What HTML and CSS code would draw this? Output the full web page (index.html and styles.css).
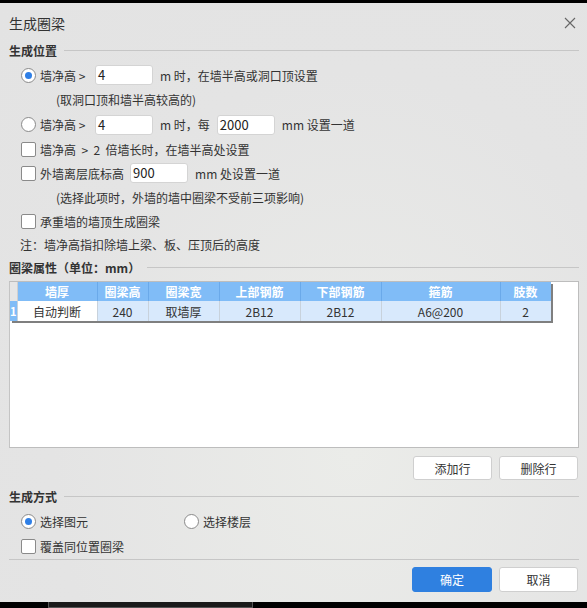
FILE: index.html
```html
<!DOCTYPE html>
<html lang="zh-CN">
<head>
    <meta charset="UTF-8" />
    <title>生成圈梁</title>
    <link rel="stylesheet" href="styles.css">
</head>
<body>
    <div class="topbar"></div>
    <div class="dialog">
        <div class="title-row">
            <span class="title">生成圈梁</span>
            <svg class="close" width="12" height="12" viewBox="0 0 12 12">
                <path d="M1 1 L11 11 M11 1 L1 11" stroke="#666" stroke-width="1.1" fill="none"/>
            </svg>
        </div>

        <div class="section"><span>生成位置</span><div class="rule"></div></div>

        <div class="row r1">
            <span class="radio checked"></span>
            <span class="lead">墙净高&nbsp;&gt;</span>
            <span class="input">4</span>
            <span>m 时，在墙半高或洞口顶设置</span>
        </div>
        <div class="row r2 hint">(取洞口顶和墙半高较高的)</div>
        <div class="row r3">
            <span class="radio"></span>
            <span class="lead">墙净高&nbsp;&gt;</span>
            <span class="input">4</span>
            <span>m 时，每</span>
            <span class="input">2000</span>
            <span>mm 设置一道</span>
        </div>
        <div class="row r4">
            <span class="check"></span>
            <span>墙净高&nbsp; &gt;&nbsp; 2&nbsp; 倍墙长时，在墙半高处设置</span>
        </div>
        <div class="row r5">
            <span class="check"></span>
            <span>外墙离层底标高</span>
            <span class="input">900</span>
            <span>mm 处设置一道</span>
        </div>
        <div class="row r6 hint">(选择此项时，外墙的墙中圈梁不受前三项影响)</div>
        <div class="row r7">
            <span class="check"></span>
            <span>承重墙的墙顶生成圈梁</span>
        </div>
        <div class="row note">注：墙净高指扣除墙上梁、板、压顶后的高度</div>

        <div class="section sec2"><span>圈梁属性（单位：mm）</span><div class="rule"></div></div>

        <div class="grid-box">
            <table class="grid">
                <tr class="head">
                    <th class="corner"></th>
                    <th class="c1">墙厚</th>
                    <th class="c2">圈梁高</th>
                    <th class="c3">圈梁宽</th>
                    <th class="c4">上部钢筋</th>
                    <th class="c5">下部钢筋</th>
                    <th class="c6">箍筋</th>
                    <th class="c7">肢数</th>
                </tr>
                <tr class="data">
                    <td class="rownum">1</td>
                    <td class="current">自动判断</td>
                    <td>240</td>
                    <td>取墙厚</td>
                    <td>2B12</td>
                    <td>2B12</td>
                    <td>A6@200</td>
                    <td>2</td>
                </tr>
            </table>
        </div>

        <div class="buttons grid-buttons">
            <button class="btn">添加行</button>
            <button class="btn">删除行</button>
        </div>

        <div class="section sec3"><span>生成方式</span><div class="rule"></div></div>

        <div class="row mode">
            <div class="mode-item">
                <span class="radio checked"></span>
                <span>选择图元</span>
            </div>
            <div class="mode-item">
                <span class="radio"></span>
                <span>选择楼层</span>
            </div>
        </div>
        <div class="row cover">
            <span class="check"></span>
            <span>覆盖同位置圈梁</span>
        </div>

        <div class="footer-rule"></div>
        <div class="buttons footer">
            <button class="btn primary">确定</button>
            <button class="btn">取消</button>
        </div>
    </div>
    <div class="taskbar">
        <div class="task"></div>
    </div>
</body>
</html>
```

FILE: styles.css
```css
html, body {
    margin: 0;
    padding: 0;
    width: 587px;
    height: 608px;
    overflow: hidden;
    font-family: "Noto Sans CJK SC", "Noto Sans", sans-serif;
    font-size: 12px;
    color: #333;
}

.topbar {
    height: 3px;
    background: #000;
}

.dialog {
    height: 599px;
    box-sizing: border-box;
    padding: 0 8px 0 9px;
    background: radial-gradient(ellipse at 60% 75%, #ebece9 0%, #e4e4e4 60%, #e3e3e3 100%);
    display: flex;
    flex-direction: column;
}

.title-row {
    height: 38px;
    display: flex;
    align-items: center;
    justify-content: space-between;
    padding-top: 1px;
    box-sizing: border-box;
}

.title {
    font-size: 14px;
    color: #333;
}

.close {
    margin-right: 3px;
}

.section {
    height: 18px;
    display: flex;
    align-items: center;
    font-weight: bold;
    color: #333;
}

.section .rule {
    flex: 1;
    margin-left: 7px;
    border-top: 1px solid #c6c6c6;
}

.sec2 {
    height: 24px;
}

.sec3 {
    height: 28px;
    padding-top: 2px;
}

.row {
    display: flex;
    align-items: center;
    gap: 7px;
    padding-left: 12px;
    height: 24px;
    white-space: nowrap;
}

.r1 { margin-top: 4px; }
.r2, .r3 { height: 25px; }
.note { height: 22px; padding-left: 11px; }

.hint {
    padding-left: 47px;
}

.lead {
    margin-left: -3px;
    width: 48px;
    flex: none;
}

.radio {
    width: 13px;
    height: 13px;
    border: 1px solid #8a8a8a;
    border-radius: 50%;
    background: #fff;
    position: relative;
    flex: none;
}

.radio.checked::after {
    content: "";
    position: absolute;
    left: 3px;
    top: 3px;
    width: 7px;
    height: 7px;
    border-radius: 50%;
    background: #2f7fe6;
}

.check {
    width: 13px;
    height: 13px;
    border: 1px solid #8a8a8a;
    border-radius: 2px;
    background: #fff;
    flex: none;
    margin-right: -3px;
}

.input {
    width: 58px;
    height: 20px;
    flex: none;
    box-sizing: border-box;
    background: #fff;
    border: 1px solid #d4d4d4;
    border-radius: 3px;
    padding-left: 2px;
    font-size: 13px;
    line-height: 18px;
    color: #222;
}

.r5 .input {
    margin-left: -1px;
}

.grid-box {
    margin-top: 2px;
    height: 167px;
    box-sizing: border-box;
    background: #fff;
    border: 1px solid #bdbdbd;
    border-left-color: #c4c4c4;
}

.grid {
    border-collapse: collapse;
    table-layout: fixed;
    box-shadow: 2px 2px 0 #7f7f7f;
}

.grid th, .grid td {
    padding: 0;
    text-align: center;
    white-space: nowrap;
}

.head th {
    height: 19px;
    background: #80bcf7;
    color: #fff;
    font-weight: bold;
    font-size: 12px;
    border-left: 1px solid #6aa9ea;
}

.head th.corner {
    background: #e6e6e6;
    border-left: none;
    border-right: 1px solid #d0d0d0;
}

.corner { width: 6px; }
.c1 { width: 79px; }
.c2 { width: 50px; }
.c3 { width: 70px; }
.c4 { width: 80px; }
.c5 { width: 80px; }
.c6 { width: 118px; }
.c7 { width: 50px; }

.data td {
    height: 20px;
    background: #d8e9fc;
    border-left: 1px solid #c8d2dc;
    color: #333;
}

.data td.rownum {
    background: #80bcf7;
    color: #fff;
    font-weight: bold;
    text-align: left;
    border-left: none;
    font-size: 11px;
}

.data td.current {
    background: #fff;
}

.buttons {
    display: flex;
    justify-content: flex-end;
    gap: 7px;
    padding-right: 1px;
}

.grid-buttons {
    margin-top: 8px;
    height: 24px;
}

.btn {
    width: 79px;
    height: 24px;
    box-sizing: border-box;
    background: #fff;
    border: 1px solid #cfcfcf;
    border-radius: 3px;
    font-family: inherit;
    font-size: 12px;
    color: #333;
    padding: 0;
}

.btn.primary {
    width: 80px;
    background: #2f80e0;
    border-color: #2f80e0;
    color: #fff;
}

.mode {
    height: 23px;
    gap: 0;
}

.mode-item {
    display: flex;
    align-items: center;
    gap: 4px;
    width: 163px;
}

.cover {
    height: 26px;
}

.footer-rule {
    border-top: 1px solid #c6c6c6;
}

.footer {
    margin-top: 7px;
}

.footer .btn {
    height: 25px;
}

.taskbar {
    height: 6px;
    background: #000;
    position: relative;
}

.task {
    position: absolute;
    left: 48px;
    top: 0;
    width: 203px;
    height: 5px;
    border: 1px solid #555;
    border-top: none;
    background: #1a1a1a;
}
```
